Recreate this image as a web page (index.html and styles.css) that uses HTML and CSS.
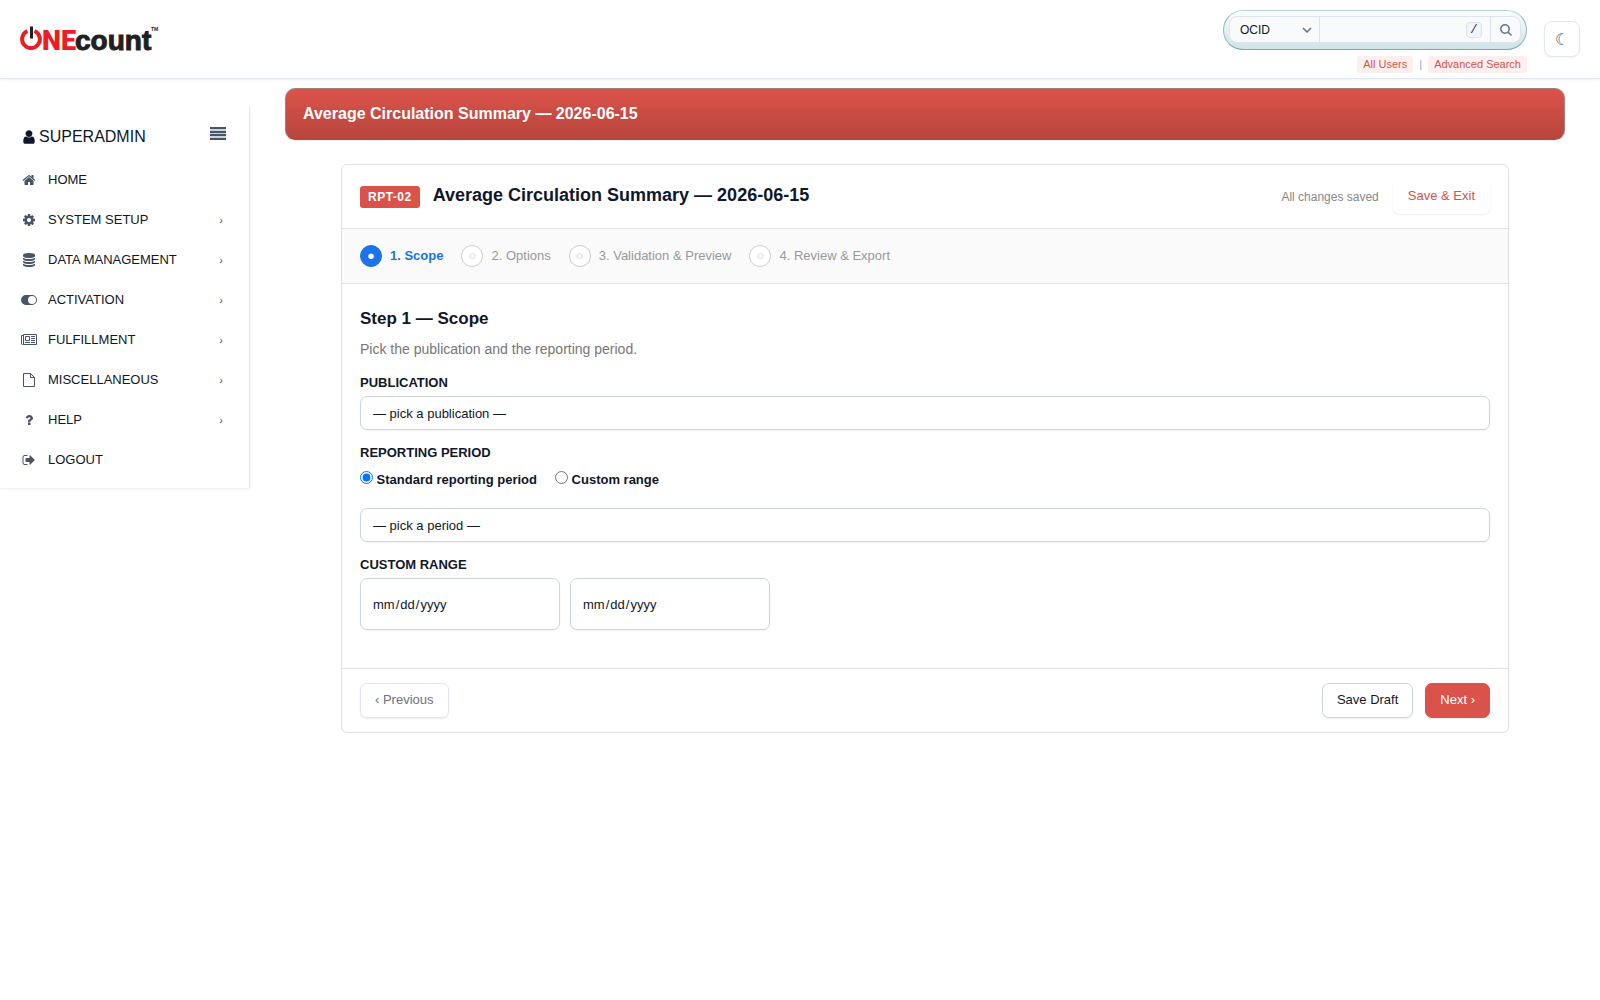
FILE: index.html
```html
<!DOCTYPE html>
<html lang="en">

<head>
    <meta charset="UTF-8">
    <meta name="viewport" content="width=device-width, initial-scale=1.0">
    <title>Average Circulation Summary</title>
    <link rel="stylesheet" href="styles.css">
</head>

<body>
    <header class="topbar">
        <a class="logo" href="#" aria-label="ONEcount">
            <svg width="142" height="40" viewBox="0 0 142 40">
                <path class="logo-ring" d="M7.500 12A8.900 8.900 0 1 0 14.500 12" />
                <path class="logo-bar" d="M11.500 7.500V19.500" />
                <text class="logo-one" x="22" y="31">NE</text>
                <text class="logo-count" x="55" y="31">count</text>
                <text class="logo-tm" x="131" y="12">TM</text>
            </svg>
        </a>
        <div class="topbar-tools">
            <div class="search-area">
                <form class="search-pill">
                    <div class="search-box">
                        <div class="search-type">
                            <select aria-label="Search by">
                                <option>OCID</option>
                            </select>
                            <svg width="10" height="6" viewBox="0 0 10 6"><path d="M1 1l4 4 4-4" /></svg>
                        </div>
                        <input type="text" class="search-input" aria-label="Search">
                        <kbd>/</kbd>
                        <button type="button" class="search-btn" aria-label="Search">
                            <svg width="12" height="12" viewBox="0 0 12 12"><circle cx="5" cy="5" r="4.200" /><path d="M8 8l3.500 3.500" /></svg>
                        </button>
                    </div>
                </form>
                <nav class="search-links">
                    <a href="#">All Users</a>
                    <span>|</span>
                    <a href="#">Advanced Search</a>
                </nav>
            </div>
            <button type="button" class="theme-btn" aria-label="Dark mode">☾</button>
        </div>
    </header>

    <div class="layout">
        <aside class="sidebar">
            <div class="sidebar-head">
                <div class="sidebar-user">
                    <svg class="icon" viewBox="0 0 1792 1792"><path d="M1536 1399q0 109-62.500 187t-150.500 78h-854q-88 0-150.500-78t-62.500-187q0-85 8.500-160.500t31.500-152 58.500-131 94-89 134.500-34.500q131 128 313 128t313-128q76 0 134.500 34.500t94 89 58.500 131 31.500 152 8.500 160.500zm-256-887q0 159-112.500 271.500t-271.500 112.500-271.500-112.500-112.500-271.500 112.500-271.500 271.500-112.500 271.500 112.500 112.500 271.500z" /></svg>
                    <span>SUPERADMIN</span>
                </div>
                <button type="button" class="sidebar-toggle" aria-label="Toggle menu">
                    <svg width="16" height="13" viewBox="0 0 16 13"><path d="M0 0h16v2H0zM0 4h16v2H0zM0 7h16v2H0zM0 11h16v2H0z" /><path class="faint" d="M0 2h16v2H0zM0 6h16v1H0zM0 9h16v2H0z" /></svg>
                </button>
            </div>
            <nav class="menu">
                <a href="#">
                    <svg class="icon" viewBox="0 0 1792 1792"><path d="M1472 992v480q0 26-19 45t-45 19h-384v-384h-256v384h-384q-26 0-45-19t-19-45v-480q0-1 .5-3t.5-3l575-474 575 474q1 2 1 6zm223-69l-62 74q-8 9-21 11h-3q-13 0-21-7l-692-577-692 577q-12 8-24 7-13-2-21-11l-62-74q-8-10-7-23.500t11-21.500l719-599q32-26 76-26t76 26l244 204v-195q0-14 9-23t23-9h192q14 0 23 9t9 23v408l219 182q10 8 11 21.500t-7 23.500z" /></svg>
                    <span>HOME</span>
                </a>
                <a href="#">
                    <svg class="icon" viewBox="0 0 1792 1792"><path d="M1152 896q0-106-75-181t-181-75-181 75-75 181 75 181 181 75 181-75 75-181zm512-109v222q0 12-8 23t-20 13l-185 28q-19 54-39 91 35 50 107 138 10 12 10 25t-9 23q-27 37-99 108t-94 71q-12 0-26-9l-138-108q-44 23-91 38-16 136-29 186-7 28-36 28h-222q-14 0-24.500-8.500t-11.500-21.500l-28-184q-49-16-90-37l-141 107q-10 9-25 9-14 0-25-11-126-114-165-168-7-10-7-23 0-12 8-23 15-21 51-66.500t54-70.500q-27-50-41-99l-183-27q-13-2-21-12.500t-8-23.500v-222q0-12 8-23t19-13l186-28q14-46 39-92-40-57-107-138-10-12-10-24 0-10 9-23 26-36 98.500-107.500t94.500-71.500q13 0 26 10l138 107q44-23 91-38 16-136 29-186 7-28 36-28h222q14 0 24.500 8.500t11.500 21.500l28 184q49 16 90 37l142-107q9-9 24-9 13 0 25 10 129 119 165 170 7 8 7 22 0 12-8 23-15 21-51 66.500t-54 70.500q26 50 41 98l183 28q13 2 21 12.500t8 23.500z" /></svg>
                    <span>SYSTEM SETUP</span>
                    <i>›</i>
                </a>
                <a href="#">
                    <svg class="icon" viewBox="0 0 1792 1792"><path d="M896 768q237 0 443-43t325-127v170q0 69-103 128t-280 93.500-385 34.500-385-34.500-280-93.500-103-128v-170q119 84 325 127t443 43zm0 768q237 0 443-43t325-127v170q0 69-103 128t-280 93.500-385 34.500-385-34.500-280-93.500-103-128v-170q119 84 325 127t443 43zm0-384q237 0 443-43t325-127v170q0 69-103 128t-280 93.500-385 34.500-385-34.500-280-93.500-103-128v-170q119 84 325 127t443 43zm0-1152q208 0 385 34.500t280 93.500 103 128v128q0 69-103 128t-280 93.500-385 34.500-385-34.500-280-93.500-103-128v-128q0-69 103-128t280-93.500 385-34.500z" /></svg>
                    <span>DATA MANAGEMENT</span>
                    <i>›</i>
                </a>
                <a href="#">
                    <svg class="icon icon-wide" viewBox="0 0 16 14"><path fill-rule="evenodd" d="M5 2h6a5 5 0 0 1 0 10H5A5 5 0 0 1 5 2zm6 1a4 4 0 1 0 0 8 4 4 0 0 0 0-8z" /></svg>
                    <span>ACTIVATION</span>
                    <i>›</i>
                </a>
                <a href="#">
                    <svg class="icon icon-wide" viewBox="0 0 16 14"><path class="line" d="M2.500 1.500h13v10h-13zM2.500 2.500h-2v8a1 1 0 0 0 2 0M4.500 3.500h4v4h-4zM10 3.500h4M10 5.500h4M10 7.500h4M4 9.500h5M10 9.500h4" /></svg>
                    <span>FULFILLMENT</span>
                    <i>›</i>
                </a>
                <a href="#">
                    <svg class="icon" viewBox="0 0 14 14"><path class="line" d="M1.500.5h7l4 4v9h-11zM8.500.5v4h4" /></svg>
                    <span>MISCELLANEOUS</span>
                    <i>›</i>
                </a>
                <a href="#">
                    <svg class="icon" viewBox="0 0 1792 1792"><path d="M1088 1256v240q0 16-12 28t-28 12h-240q-16 0-28-12t-12-28v-240q0-16 12-28t28-12h240q16 0 28 12t12 28zm316-600q0 54-15.500 101t-35 76.500-55 59.500-57.500 43.500-61 35.500q-41 23-68.500 65t-27.500 67q0 17-12 32.500t-28 15.500h-240q-15 0-25.500-18.500t-10.500-37.500v-45q0-83 65-156.500t143-108.500q59-27 84-56t25-76q0-42-46.500-74t-107.500-32q-65 0-108 29-35 25-107 115-13 16-31 16-12 0-25-8l-164-125q-13-10-15.500-25t5.500-28q160-266 464-266 80 0 161 31t146 83 106 127.500 41 158.500z" /></svg>
                    <span>HELP</span>
                    <i>›</i>
                </a>
                <a href="#">
                    <svg class="icon" viewBox="0 0 1792 1792"><path d="M704 1440q0 4 1 20t.5 26.500-3 23.500-10 19.500-20.500 6.500h-320q-119 0-203.500-84.500t-84.500-203.500v-704q0-119 84.500-203.500t203.500-84.500h320q13 0 22.500 9.500t9.500 22.500q0 4 1 20t.5 26.500-3 23.500-10 19.500-20.500 6.500h-320q-66 0-113 47t-47 113v704q0 66 47 113t113 47h312l11.500 1 11.500 3 8 5.500 7 9 2 13.500zm928-544q0 26-19 45l-544 544q-19 19-45 19t-45-19-19-45v-288h-448q-26 0-45-19t-19-45v-384q0-26 19-45t45-19h448v-288q0-26 19-45t45-19 45 19l544 544q19 19 19 45z" /></svg>
                    <span>LOGOUT</span>
                </a>
            </nav>
        </aside>

        <main class="content">
            <h1 class="page-title">Average Circulation Summary — 2026-06-15</h1>

            <section class="wizard">
                <div class="wizard-head">
                    <div class="wizard-title">
                        <span class="badge">RPT-02</span>
                        <h2>Average Circulation Summary — 2026-06-15</h2>
                    </div>
                    <div class="wizard-status">
                        <span>All changes saved</span>
                        <button type="button" class="btn btn-link">Save &amp; Exit</button>
                    </div>
                </div>

                <ol class="steps">
                    <li class="active"><span class="dot">●</span>1. Scope</li>
                    <li><span class="dot">○</span>2. Options</li>
                    <li><span class="dot">○</span>3. Validation &amp; Preview</li>
                    <li><span class="dot">○</span>4. Review &amp; Export</li>
                </ol>

                <form class="wizard-body">
                    <h3>Step 1 — Scope</h3>
                    <p>Pick the publication and the reporting period.</p>

                    <label class="field-label" for="publication">PUBLICATION</label>
                    <select class="field" id="publication">
                        <option>— pick a publication —</option>
                    </select>

                    <label class="field-label" for="period">REPORTING PERIOD</label>
                    <div class="radios">
                        <label><input type="radio" name="mode" checked> Standard reporting period</label>
                        <label><input type="radio" name="mode"> Custom range</label>
                    </div>
                    <select class="field" id="period">
                        <option>— pick a period —</option>
                    </select>

                    <label class="field-label" for="from">CUSTOM RANGE</label>
                    <div class="dates">
                        <input type="date" class="field" id="from">
                        <input type="date" class="field" aria-label="Range end">
                    </div>
                </form>

                <div class="wizard-foot">
                    <button type="button" class="btn btn-muted">‹ Previous</button>
                    <div class="foot-actions">
                        <button type="button" class="btn">Save Draft</button>
                        <button type="button" class="btn btn-primary">Next ›</button>
                    </div>
                </div>
            </section>
        </main>
    </div>
</body>

</html>
```

FILE: styles.css
```css
* {
    box-sizing: border-box;
}

body {
    margin: 0;
    background: #fff;
    color: #0f172a;
    font-family: "Liberation Sans", Arial, sans-serif;
    font-size: 13px;
    line-height: 20px;
}

a {
    color: inherit;
    text-decoration: none;
}

button,
input,
select {
    font-family: inherit;
    color: inherit;
}

/* Top bar */
.topbar {
    display: flex;
    align-items: center;
    justify-content: space-between;
    min-height: 79px;
    padding: 0 20px;
    border-bottom: 1px solid #e2e8f0;
    box-shadow: 0 1px 3px rgba(15, 23, 42, 0.06);
}

.logo svg {
    display: block;
}

.logo-ring,
.logo-bar {
    fill: none;
    stroke-width: 4;
}

.logo-ring {
    stroke: #ed1c24;
}

.logo-bar {
    stroke: #231f20;
    stroke-width: 3;
}

.logo text {
    font-weight: 900;
}

.logo .logo-one {
    fill: #ed1c24;
    font-family: Roboto, sans-serif;
    font-size: 27px;
}

.logo .logo-count {
    fill: #231f20;
    stroke: #231f20;
    font-size: 28px;
}

.logo .logo-tm {
    fill: #231f20;
    font-size: 5px;
}

.topbar-tools {
    display: flex;
    align-items: center;
    gap: 17px;
}

.search-area {
    display: flex;
    flex-direction: column;
    align-items: flex-end;
    gap: 6px;
    padding-top: 5px;
}

.search-pill {
    width: 304px;
    height: 40px;
    padding: 5px;
    border: 1px solid #8fb8c0;
    border-top-color: #b5d3d8;
    border-bottom-color: #7aa9b2;
    border-radius: 20px;
    background: linear-gradient(#fbfdfd, #cfe3e7);
}

.search-box {
    display: flex;
    align-items: center;
    height: 27px;
    border: 1px solid #dde6ef;
    border-radius: 8px;
    background: #f8fafc;
    overflow: hidden;
}

.search-type {
    display: flex;
    align-items: center;
    width: 90px;
    height: 100%;
    padding: 0 7px 0 10px;
    border-right: 1px solid #dbe3ec;
}

.search-type select {
    flex: 1;
    min-width: 0;
    padding: 0;
    border: 0;
    appearance: none;
    background: none;
    font-size: 12px;
}

.search-type svg,
.search-btn svg {
    fill: none;
    stroke: #64748b;
    stroke-width: 1.5;
}

.search-input {
    flex: 1;
    min-width: 0;
    border: 0;
    background: none;
}

kbd {
    width: 16px;
    height: 16px;
    margin-right: 8px;
    border: 1px solid #dbe3ec;
    border-radius: 4px;
    background: #f1f5f9;
    color: #334155;
    font: 13px/14px "Liberation Mono", monospace;
    text-align: center;
}

.search-btn {
    display: flex;
    align-items: center;
    justify-content: center;
    width: 30px;
    height: 100%;
    padding: 0;
    border: 0;
    border-left: 1px solid #dbe3ec;
    background: none;
}

.search-links {
    display: flex;
    gap: 6px;
    font-size: 11px;
    line-height: 17px;
    color: #94a3b8;
}

.search-links a {
    padding: 0 6px;
    border-radius: 3px;
    background: #fcefee;
    color: #d9534a;
}

.theme-btn {
    width: 36px;
    height: 36px;
    padding: 0;
    border: 1px solid #e2e8f0;
    border-radius: 8px;
    background: #fff;
    box-shadow: 0 1px 2px rgba(15, 23, 42, 0.05);
    color: #475569;
    font-size: 16px;
}

/* Sidebar */
.layout {
    display: flex;
    align-items: flex-start;
}

.sidebar {
    flex: none;
    width: 250px;
    margin-top: 28px;
    padding-bottom: 8px;
    border-right: 1px solid #e2e8f0;
    box-shadow: 0 1px 2px rgba(15, 23, 42, 0.08);
}

.sidebar-head {
    display: flex;
    justify-content: space-between;
    height: 53px;
    padding: 20px 23px 0 21px;
}

.sidebar-user {
    display: flex;
    gap: 2px;
    font-size: 16px;
}

.sidebar-toggle {
    display: flex;
    align-self: flex-start;
    padding: 0;
    border: 0;
    background: none;
}

.sidebar-toggle svg {
    fill: #475569;
}

.sidebar-toggle .faint {
    fill: #cbd5e1;
}

.icon {
    width: 14px;
    height: 14px;
    margin: 0 2px;
    overflow: visible;
    fill: #475569;
}

.sidebar-user .icon {
    width: 16px;
    height: 16px;
    margin: 2px 0 0;
    fill: #0f172a;
}

.icon-wide {
    width: 16px;
    margin: 0 1px;
}

.icon .line {
    fill: none;
    stroke: #475569;
}

.menu a {
    display: flex;
    align-items: center;
    height: 40px;
    padding: 0 26px 0 20px;
}

.menu span {
    flex: 1;
    margin-left: 10px;
}

.menu i {
    color: #475569;
    font-size: 11px;
    font-style: normal;
}

/* Page */
.content {
    flex: 1;
    min-width: 0;
    padding: 9px 35px;
}

.page-title {
    margin: 0 0 24px;
    padding: 15px 17px;
    border: 1px solid rgba(140, 180, 180, 0.5);
    border-bottom-color: #b8453c;
    border-radius: 10px;
    background: linear-gradient(#db534a, #b8453c);
    box-shadow: 0 1px 2px rgba(15, 23, 42, 0.08);
    color: #fff;
    font-size: 16px;
    line-height: 20px;
}

.wizard {
    margin: 0 56px;
    border: 1px solid #e0e0e0;
    border-radius: 6px;
}

.wizard-head,
.wizard-foot {
    display: flex;
    align-items: center;
    justify-content: space-between;
    padding: 14px 18px;
}

.wizard-head {
    border-bottom: 1px solid #e0e0e0;
}

.wizard-title {
    display: flex;
    align-items: baseline;
    gap: 13px;
}

.wizard-title h2 {
    margin: 0;
    font-size: 18px;
}

.badge {
    padding: 0 8px;
    border-radius: 3px;
    background: #d9534a;
    color: #fff;
    font-size: 12px;
    font-weight: bold;
    line-height: 22px;
    letter-spacing: 0.5px;
}

.wizard-status {
    display: flex;
    align-items: center;
    gap: 14px;
    color: #888;
    font-size: 12px;
}

.btn {
    height: 35px;
    padding: 0 14px 2px;
    border: 1px solid #cbd5e1;
    border-radius: 7px;
    background: #fff;
    box-shadow: 0 1px 2px rgba(15, 23, 42, 0.08);
    font-size: 13px;
}

.btn-link {
    border-color: transparent;
    color: #d9534a;
}

.btn-muted {
    border-color: #e0e5ee;
    color: #6b7280;
}

.btn-primary {
    border-color: #d9534a;
    background: #d9534a;
    color: #fff;
}

.steps {
    display: flex;
    gap: 18px;
    margin: 0;
    padding: 16px 18px;
    border-bottom: 1px solid #e0e0e0;
    background: #fafafa;
    color: #999;
    line-height: 22px;
    list-style: none;
}

.steps li {
    display: flex;
    gap: 8px;
}

.steps .active {
    color: #1a73e8;
    font-weight: bold;
}

.dot {
    width: 22px;
    height: 22px;
    border: 1px solid #ccc;
    border-radius: 50%;
    background: #fff;
    color: #bbb;
    font-size: 13px;
    line-height: 20px;
    text-align: center;
}

.active .dot {
    border-color: #1a73e8;
    background: #1a73e8;
    color: #fff;
}

.wizard-body {
    padding: 25px 18px 38px;
}

.wizard-body h3 {
    margin: 0;
    font-size: 17px;
}

.wizard-body p {
    margin: 10px 0 14px;
    color: #777;
    font-size: 14px;
}

.field-label {
    display: block;
    margin: 13px 0 3px;
    font-weight: bold;
}

.field {
    display: block;
    width: 100%;
    height: 34px;
    padding: 0 12px;
    border: 1px solid #cbd5e1;
    border-radius: 7px;
    appearance: none;
    background: #fff;
    box-shadow: 0 1px 2px rgba(15, 23, 42, 0.05);
    font-size: 13px;
}

.radios {
    display: flex;
    gap: 18px;
    margin: 7px 0 18px;
    font-weight: bold;
}

.radios input {
    width: 13px;
    height: 13px;
    margin: 0;
}

.dates {
    display: flex;
    gap: 10px;
}

.dates .field {
    width: 200px;
    height: 52px;
    padding: 0 11px;
}

.dates .field::-webkit-calendar-picker-indicator {
    display: none;
}

.wizard-foot {
    border-top: 1px solid #e0e0e0;
}

.foot-actions {
    display: flex;
    gap: 12px;
}
```
